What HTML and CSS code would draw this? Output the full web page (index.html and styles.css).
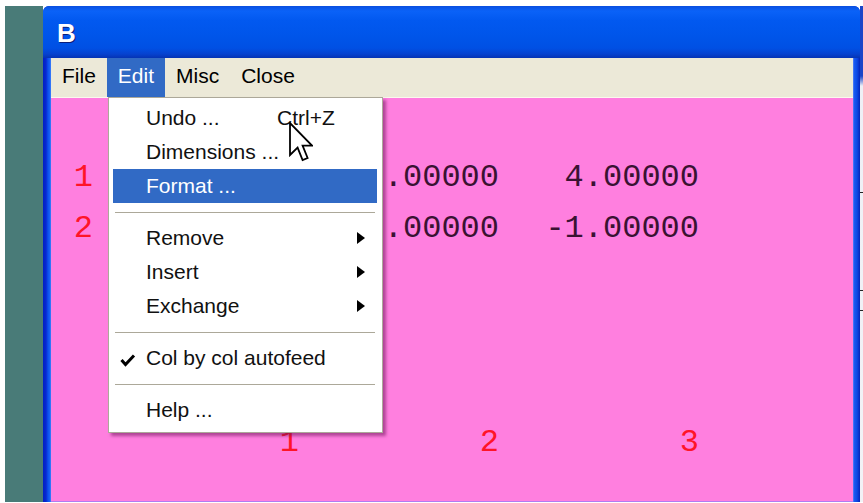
FILE: index.html
```html
<!DOCTYPE html>
<html lang="en">
<head>
<meta charset="utf-8">
<title>B</title>
<link rel="stylesheet" href="styles.css">
</head>
<body>
<div class="screen">
  <div class="desktop"></div>
  <div class="window">
    <div class="titlebar"><span class="title">B</span></div>
    <div class="frame">
      <div class="edge edge-left"></div>
      <div class="inner">
        <nav class="menubar">
          <span class="menu-item">File</span>
          <span class="menu-item active">Edit</span>
          <span class="menu-item">Misc</span>
          <span class="menu-item">Close</span>
        </nav>
        <main class="client">
          <div class="matrix">
            <span class="row-label">1</span><span class="cell"></span><span class="cell">2.00000</span><span class="cell">4.00000</span>
            <span class="row-label">2</span><span class="cell"></span><span class="cell">5.00000</span><span class="cell">-1.00000</span>
          </div>
          <div class="matrix col-labels">
            <span class="row-label"></span><span class="cell">1</span><span class="cell">2</span><span class="cell">3</span>
          </div>
        </main>
      </div>
      <div class="edge edge-right"></div>
    </div>

    <div class="dropdown">
      <div class="item"><span></span><span class="label">Undo ...</span><span class="shortcut">Ctrl+Z</span><span></span></div>
      <div class="item"><span></span><span class="label">Dimensions ...</span><span></span><span></span></div>
      <div class="item selected"><span></span><span class="label">Format ...</span><span></span><span></span></div>
      <div class="sep"></div>
      <div class="item"><span></span><span class="label">Remove</span><span></span><span class="arrow"></span></div>
      <div class="item"><span></span><span class="label">Insert</span><span></span><span class="arrow"></span></div>
      <div class="item"><span></span><span class="label">Exchange</span><span></span><span class="arrow"></span></div>
      <div class="sep"></div>
      <div class="item"><span class="check"><svg width="16" height="16" viewBox="0 0 16 16"><polyline points="1.5,8 5.5,12.5 14,3.5" fill="none" stroke="#000" stroke-width="3"/></svg></span><span class="label">Col by col autofeed</span><span></span><span></span></div>
      <div class="sep"></div>
      <div class="item"><span></span><span class="label">Help ...</span><span></span><span></span></div>
    </div>

    <svg class="cursor" width="24" height="42" viewBox="0 0 12 21">
      <path d="M0.5 0.5 L0.5 16.5 L4.3 12.8 L6.8 19 L9.3 18 L6.8 11.8 L11.5 11.8 Z" fill="#fff" stroke="#000" stroke-width="0.9" stroke-linejoin="miter"/>
    </svg>
  </div>
  <div class="backdrop-right">
    <span class="tick t1"></span>
    <span class="tick t2"></span>
    <span class="tick t3"></span>
  </div>
</div>
</body>
</html>
```
FILE: styles.css
```css
html, body {
  margin: 0;
  background: #ffffff;
}

body {
  padding: 6px 0 1px 5px;
  width: 858px;
  height: 496px;
  overflow: hidden;
}

.screen {
  display: flex;
  height: 496px;
}

.desktop {
  width: 38px;
  background: #497b78;
}

/* Luna-style window */
.window {
  position: relative;
  width: 817px;
  display: flex;
  flex-direction: column;
  border-radius: 6px 6px 0 0;
  overflow: hidden;
  background: #0831d9;
}

.titlebar {
  height: 52px;
  display: flex;
  align-items: center;
  padding-left: 14px;
  background: linear-gradient(to bottom,
    #0a4fe0 0px, #0a62f8 5px, #0259f0 14px, #0055ea 30px,
    #0050e4 42px, #0642cf 48px, #0533b4 52px);
}

.title {
  font-family: "Liberation Sans", Arial, sans-serif;
  font-weight: bold;
  font-size: 26px;
  color: #ffffff;
  text-shadow: 1px 1px 0 #0a1e7a;
  margin-top: 2px;
}

.frame {
  flex: 1;
  display: flex;
  min-height: 0;
}

.edge-left {
  width: 8px;
  background: linear-gradient(to right, #0020c4 0, #0728d0 3px, #0d50ee 5px, #1a64f6 7px, #4a86fa 8px);
}

.edge-right {
  width: 7px;
  background: linear-gradient(to right, #6a8cf8 0, #1a5cf2 1px, #0c48e4 4px, #0424b8 7px);
}

.inner {
  flex: 1;
  display: flex;
  flex-direction: column;
  min-width: 0;
}

.menubar {
  height: 39px;
  display: flex;
  align-items: stretch;
  background: #ece9d8;
  border-bottom: 1px solid #fbf8ee;
  font-family: "Liberation Sans", Tahoma, sans-serif;
  font-size: 21px;
  color: #000;
}

.menu-item {
  display: flex;
  align-items: center;
  padding: 0 11px 3px;
}

.menu-item.active {
  background: #316ac5;
  color: #ffffff;
}

.client {
  flex: 1;
  background: #ff7fdf;
  border-bottom: 1px solid #b07cf0;
  padding-top: 54px;
  font-family: "Liberation Mono", "Courier New", monospace;
  font-size: 32px;
  color: #3a1232;
}

.matrix {
  display: grid;
  grid-template-columns: 48px 200px 200px 200px;
  grid-auto-rows: 51px;
  line-height: 51px;
}

.matrix > span {
  text-align: right;
  white-space: pre;
}

.row-label {
  color: #ff1428;
  padding-right: 6px;
}

.col-labels {
  margin-top: 163px;
  color: #ff1428;
}

/* Edit drop-down */
.dropdown {
  position: absolute;
  left: 65px;
  top: 91px;
  width: 275px;
  box-sizing: border-box;
  background: #ffffff;
  border: 1px solid #aca899;
  padding: 3px 5px 5px 4px;
  box-shadow: 3px 3px 3px rgba(110, 20, 90, 0.55);
  font-family: "Liberation Sans", Tahoma, sans-serif;
  font-size: 21px;
  color: #111;
}

.item {
  display: grid;
  grid-template-columns: 33px 131px 80px 20px;
  height: 34px;
  align-items: center;
  white-space: nowrap;
}

.item.selected {
  background: #316ac5;
  color: #ffffff;
}

.label {
  overflow: visible;
}

.check {
  display: flex;
  padding-left: 7px;
  padding-top: 3px;
}

.arrow {
  width: 0;
  height: 0;
  border-left: 8px solid #000;
  border-top: 6px solid transparent;
  border-bottom: 6px solid transparent;
}

.sep {
  height: 1px;
  background: #aca899;
  margin: 9px 2px 8px;
}

.cursor {
  position: absolute;
  left: 246px;
  top: 116px;
}

.backdrop-right {
  position: relative;
  width: 3px;
  background: linear-gradient(to bottom, #1b45c8 0, #1b45c8 70px, #eef0f6 80px, #f2f2f6 100%);
}

.tick {
  position: absolute;
  left: 0;
  width: 3px;
  height: 1px;
  background: #222;
}

.t1 { top: 186px; }
.t2 { top: 284px; }
.t3 { top: 304px; }
```
